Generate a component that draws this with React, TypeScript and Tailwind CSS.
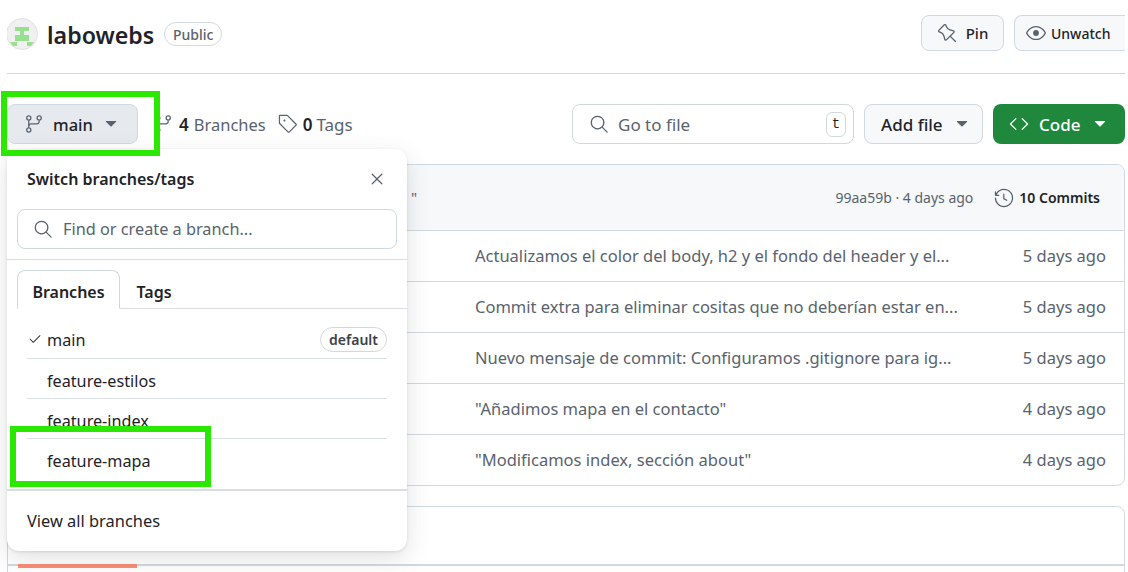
import { GoCheck, GoCode, GoEye, GoGitBranch, GoHistory, GoPin, GoSearch, GoTag, GoTriangleDown, GoX } from "react-icons/go";

const commits = [
  { msg: "Actualizamos el color del body, h2 y el fondo del header y el...", time: "5 days ago" },
  { msg: "Commit extra para eliminar cositas que no deberían estar en...", time: "5 days ago" },
  { msg: "Nuevo mensaje de commit: Configuramos .gitignore para ig...", time: "5 days ago" },
  { msg: "\"Añadimos mapa en el contacto\"", time: "4 days ago" },
  { msg: "\"Modificamos index, sección about\"", time: "4 days ago" },
];

const branches = ["feature-estilos", "feature-index", "feature-mapa"];

function BranchPopover() {
  return (
    <div className="absolute left-[7px] top-[149px] w-[400px] h-[402px] rounded-[12px] bg-white text-[#1f2328] shadow-[0_1px_3px_rgba(31,35,40,0.12),0_8px_24px_rgba(66,74,83,0.16)]">
      <div className="flex h-[60px] items-center justify-between pl-[20px] pr-[20px]">
        <span className="text-[16px] font-semibold">Switch branches/tags</span>
        <GoX className="text-[#59636e]" size={20} />
      </div>
      <div className="mx-[10px] flex h-[40px] items-center rounded-[8px] border border-[#d1d9e0] pl-[15px]">
        <GoSearch className="text-[#59636e]" size={20} />
        <span className="ml-[10px] text-[16.3px] text-[#59636e]">Find or create a branch...</span>
      </div>
      <div className="mt-[10px] border-t border-[#d8dee4] pl-[10px] pt-[10px]">
        <div className="flex h-[39px] border-b border-[#d8dee4]">
          <div className="-mb-px flex w-[103px] items-center justify-center rounded-t-[8px] border border-b-white border-[#d1d9e0] bg-white pt-[4px] text-[16px] font-semibold">Branches</div>
          <div className="flex w-[68px] items-center justify-center pt-[5px] text-[16px] font-semibold">Tags</div>
        </div>
      </div>
      <div className="mx-[20px] mt-[10px]">
        <div className="flex h-[40px] items-center justify-between border-b border-[#d8dee4]">
          <div className="flex items-center">
            <GoCheck className="-ml-[2px] mr-[2px] mt-[2px] w-[20px]" size={14} />
            <span className="pt-[4px] text-[16.2px]">main</span>
          </div>
          <span className="mt-[2px] flex h-[25px] items-center rounded-full border border-[#d1d9e0] px-[8px] text-[14px] font-semibold text-[#3b424a]">default</span>
        </div>
        {branches.map((name, i) => (
          <div key={name} className={i < 2 ? "flex h-[40px] items-center border-b border-[#d8dee4] pl-[20px] pt-[6px] text-[16.2px]" : "flex h-[40px] items-center pl-[20px] pt-[5px] text-[16.2px]"}>
            {name}
          </div>
        ))}
      </div>
      <div className="mt-[10px] flex h-[62px] items-center border-t-2 border-[#d8dee4] pl-[20px] text-[16.4px]">View all branches</div>
    </div>
  );
}

export default function App() {
  return (
    <div className="relative h-[572px] w-[1128px] overflow-hidden bg-white pl-[7px] pr-[3px] font-['Noto_Sans',sans-serif] text-[#1f2328]">
      {/* repo header */}
      <div className="flex h-[73px] items-start justify-between overflow-hidden">
        <div className="-ml-px mt-[18px] flex items-center">
          <svg width="32" height="32" viewBox="0 0 32 32">
            <circle cx="16" cy="16" r="15.5" fill="#f0f0f0" stroke="#dfe2e5" />
            <path d="M9 9h14v4h-5v4h5v6H9v-6h5v-4H9z" fill="#97e08f" />
            <path d="M4 24h7v4H7zM21 24h7l-3 4h-4z" fill="#97e08f" />
          </svg>
          <span className="ml-[9px] pt-[2px] text-[23.2px] font-semibold leading-[30px]">labowebs</span>
          <span className="ml-[10px] flex h-[24px] w-[58px] items-center justify-center rounded-full border border-[#d1d9e0] text-[14px] font-medium text-[#59636e]">Public</span>
        </div>
        <div className="mt-[15px] flex gap-[10px]">
          <div className="flex h-[36px] w-[83px] items-center justify-center gap-[8px] rounded-[8px] border border-[#d1d9e0] bg-[#f6f8fa] text-[15px] font-medium">
            <GoPin className="text-[#59636e]" size={21} />
            Pin
          </div>
          <div className="flex h-[36px] w-[111px] items-center gap-[5px] rounded-l-[8px] border-y border-l border-[#d1d9e0] bg-[#f6f8fa] pl-[11px] text-[14px] font-medium">
            <GoEye className="text-[#59636e]" size={20} />
            Unwatch
          </div>
        </div>
      </div>
      <div className="h-px bg-[#d1d9e0]" />

      {/* branch toolbar */}
      <div className="mt-[30px] flex h-[40px] items-center">
        <div className="flex h-[40px] w-[131px] items-center rounded-[8px] border border-[#d1d9e0] bg-[#e6eaef] pl-[16px]">
          <GoGitBranch className="text-[#59636e]" size={20} />
          <span className="ml-[9px] pt-[2px] text-[16.5px] font-medium">main</span>
          <GoTriangleDown className="ml-[8px] text-[#59636e]" size={20} />
        </div>
        <div className="ml-[15px] flex items-center">
          <GoGitBranch className="text-[#59636e]" size={20} />
          <span className="ml-[6px] pt-[2px] text-[17px] font-semibold">4</span>
          <span className="ml-[5px] pt-[2px] text-[16.5px] text-[#59636e]">Branches</span>
        </div>
        <div className="ml-[12px] flex items-center">
          <GoTag className="text-[#59636e]" size={20} />
          <span className="ml-[5px] pt-[2px] text-[17px] font-semibold">0</span>
          <span className="ml-[4px] pt-[2px] text-[17px] text-[#59636e]">Tags</span>
        </div>
        <div className="ml-auto flex h-[40px] w-[282px] items-center rounded-[8px] border border-[#d1d9e0] pl-[16px] pr-[7px]">
          <GoSearch className="text-[#59636e]" size={20} />
          <span className="ml-[9px] pt-[2px] text-[17px] text-[#59636e]">Go to file</span>
          <span className="ml-auto flex h-[25px] w-[20px] items-center justify-center rounded-[6px] border border-[#d1d9e0] font-['Liberation_Mono',monospace] text-[14px]">t</span>
        </div>
        <div className="ml-[10px] flex h-[40px] w-[119px] items-center rounded-[8px] border border-[#d1d9e0] bg-[#f6f8fa] pl-[16px] text-[17px] font-medium">
          <span className="pt-[2px]">Add file</span>
          <GoTriangleDown className="ml-[9px] text-[#59636e]" size={20} />
        </div>
        <div className="ml-[10px] flex h-[40px] w-[132px] items-center rounded-[8px] bg-[#1f883d] pl-[16px] text-[17px] font-medium text-white">
          <GoCode size={20} />
          <span className="ml-[10px] pt-[2px]">Code</span>
          <GoTriangleDown className="ml-[10px]" size={20} />
        </div>
      </div>

      {/* commits table */}
      <div className="mt-[20px] h-[322px] overflow-hidden rounded-[8px] border border-[#d1d9e0]">
        <div className="flex h-[66px] items-center border-b border-[#d1d9e0] bg-[#f6f8fa] pl-[403px] pr-[24px]">
          <span className="text-[15px] text-[#59636e]">"</span>
          <span className="ml-auto text-[14px] text-[#59636e]">99aa59b · 4 days ago</span>
          <GoHistory className="ml-[21px] text-[#59636e]" size={20} />
          <span className="ml-[5px] text-[14px] font-semibold">10 Commits</span>
        </div>
        {commits.map((c, i) => (
          <div key={c.msg} className={i < 4 ? "flex h-[51px] items-center justify-between border-b border-[#d1d9e0] pl-[467px] pr-[18px]" : "flex h-[51px] items-center justify-between pl-[467px] pr-[18px]"}>
            <span className="text-[16.5px] text-[#59636e]">{c.msg}</span>
            <span className="text-[16.5px] text-[#59636e]">{c.time}</span>
          </div>
        ))}
      </div>

      {/* readme box */}
      <div className="mt-[20px] h-[80px] rounded-t-[8px] border border-[#d1d9e0]">
        <div className="mt-[60px] h-[2px] bg-[#d1d9e0]">
          <div className="-mt-[3px] ml-[10px] h-[4px] w-[119px] bg-[#fd8c73]" />
        </div>
      </div>

      <BranchPopover />

      {/* green highlight boxes */}
      <div className="absolute left-[1px] top-[91px] h-[65px] w-[159px] border-[6px] border-[#2ae800]" />
      <div className="absolute left-[10px] top-[426px] h-[61px] w-[201px] border-[6px] border-[#2ae800]" />
    </div>
  );
}
